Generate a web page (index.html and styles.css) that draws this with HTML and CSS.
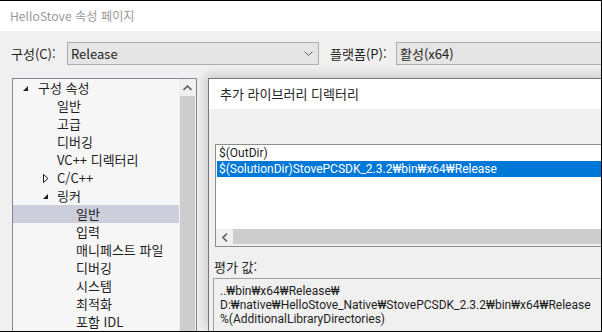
FILE: index.html
```html
<!DOCTYPE html>
<html lang="ko">
<head>
<meta charset="utf-8">
<link rel="stylesheet" href="styles.css">
</head>
<body>
<div class="win">
  <div class="titlebar">HelloStove 속성 페이지</div>
  <div class="body">
    <div class="cfg-row">
      <span class="lbl">구성(C):</span>
      <div class="combo cfg"><span>Release</span>
        <svg class="chev" width="9" height="5" viewBox="0 0 9 5"><path d="M0.5 0.5 L4.5 4.5 L8.5 0.5" fill="none" stroke="#606060" stroke-width="1"/></svg>
      </div>
      <span class="lbl plat-lbl">플랫폼(P):</span>
      <div class="combo plat"><span>활성(x64)</span></div>
    </div>
    <div class="main">
      <div class="tree">
        <div class="tree-list">
          <div class="row l0"><svg class="exp" width="6" height="6" viewBox="0 0 6 6"><polygon points="5,0 5,5 0,5" fill="#1e1e1e"/></svg>구성 속성</div>
          <div class="row l1">일반</div>
          <div class="row l1">고급</div>
          <div class="row l1">디버깅</div>
          <div class="row l1">VC++ 디렉터리</div>
          <div class="row l1"><svg class="col" width="6" height="9" viewBox="0 0 6 9"><polygon points="0.5,0.5 5,4.5 0.5,8.5" fill="none" stroke="#1e1e1e" stroke-width="1"/></svg>C/C++</div>
          <div class="row l1"><svg class="exp" width="6" height="6" viewBox="0 0 6 6"><polygon points="5,0 5,5 0,5" fill="#1e1e1e"/></svg>링커</div>
          <div class="row l2 sel">일반</div>
          <div class="row l2">입력</div>
          <div class="row l2">매니페스트 파일</div>
          <div class="row l2">디버깅</div>
          <div class="row l2">시스템</div>
          <div class="row l2">최적화</div>
          <div class="row l2">포함 IDL</div>
        </div>
        <div class="vscroll">
          <div class="sbtn"><svg width="9" height="6" viewBox="0 0 9 6"><path d="M0.5 5 L4.5 1 L8.5 5" fill="none" stroke="#606060" stroke-width="1.6"/></svg></div>
          <div class="vthumb"></div>
        </div>
      </div>
      <div class="panel">
        <div class="panel-head">추가 라이브러리 디렉터리</div>
        <div class="panel-body">
          <div class="listbox">
            <div class="items">
              <div class="item">$(OutDir)</div>
              <div class="item selitem">$(SolutionDir)StovePCSDK_2.3.2₩bin₩x64₩Release</div>
            </div>
            <div class="hscroll">
              <div class="sbtn h"><svg width="6" height="9" viewBox="0 0 6 9"><path d="M5 0.5 L1 4.5 L5 8.5" fill="none" stroke="#606060" stroke-width="1.6"/></svg></div>
              <div class="hthumb"></div>
            </div>
          </div>
          <div class="eval-label">평가 값:</div>
          <div class="evalbox">
            <div class="line">..₩bin₩x64₩Release₩</div>
            <div class="line">D:₩native₩HelloStove_Native₩StovePCSDK_2.3.2₩bin₩x64₩Release</div>
            <div class="line">%(AdditionalLibraryDirectories)</div>
          </div>
        </div>
      </div>
    </div>
  </div>
</div>
</body>
</html>
```

FILE: styles.css
```css
* { box-sizing: border-box; }
html, body { margin: 0; padding: 0; }
body {
  font-family: "Noto Sans CJK KR", sans-serif;
  font-size: 12px;
  color: #1e1e1e;
  background: #000;
}
.win {
  width: 602px;
  height: 332px;
  border-top: 1px solid #000;
  border-right: 1px solid #000;
  border-bottom: 1px solid #000;
  background: #f0f0f0;
  overflow: hidden;
  display: flex;
  flex-direction: column;
}
.titlebar {
  height: 30px;
  line-height: 30px;
  background: #fff;
  color: #9a9a9a;
  padding-left: 10px;
  font-size: 12.2px;
  flex: none;
}
.body {
  flex: 1;
  display: flex;
  flex-direction: column;
  padding-top: 11px;
  min-height: 0;
}
.cfg-row {
  display: flex;
  align-items: center;
  height: 23px;
  padding-left: 11px;
  flex: none;
  font-size: 13px;
}
.lbl { width: 56px; flex: none; }
.plat-lbl { margin-left: 11px; width: 66px; }
.combo {
  height: 23px;
  background: #e5e5e5;
  border: 1px solid #adadad;
  display: flex;
  align-items: center;
  padding-left: 3px;
  flex: none;
}
.combo.cfg { width: 252px; justify-content: space-between; padding-right: 5px; }
.combo.plat { width: 206px; }
.chev { display: block; }
.main {
  flex: 1;
  display: flex;
  margin-top: 13px;
  padding-left: 12px;
  min-height: 0;
}
.tree {
  width: 185px;
  flex: none;
  border: 1px solid #828790;
  border-bottom: none;
  background: #f6f6f6;
  display: flex;
  font-size: 13px;
}
.tree-list { flex: 1; }
.row {
  height: 18px;
  line-height: 18px;
  position: relative;
  white-space: nowrap;
}
.row.l0 { padding-left: 25px; }
.row.l1 { padding-left: 44px; }
.row.l2 { padding-left: 63px; }
.row.sel { background: #cccedb; }
.row .exp { position: absolute; left: 10px; top: 7px; }
.row.l1 .exp { left: 30px; }
.row .col { position: absolute; left: 30px; top: 5px; }
.vscroll {
  width: 17px;
  flex: none;
  background: #f0f0f0;
  display: flex;
  flex-direction: column;
}
.sbtn {
  width: 17px;
  height: 17px;
  flex: none;
  display: flex;
  align-items: center;
  justify-content: center;
}
.sbtn svg { display: block; }
.vthumb { flex: 1; background: #cdcdcd; margin: 0 1px; }
.panel {
  flex: none;
  width: 400px;
  border-left: 1px solid #767676;
  border-top: 1px solid #767676;
  background: #f0f0f0;
  box-shadow: -3px -3px 10px rgba(0,0,0,0.16);
  display: flex;
  flex-direction: column;
  margin-left: 11px;
}
.panel-head {
  height: 30px;
  line-height: 30px;
  background: #fff;
  padding-left: 11px;
  flex: none;
  font-size: 13px;
}
.panel-body {
  flex: 1;
  display: flex;
  flex-direction: column;
}
.listbox {
  margin-top: 35px;
  margin-left: 6px;
  height: 103px;
  border: 1px solid #8c8c8c;
  border-right: none;
  background: #fff;
  display: flex;
  flex-direction: column;
  flex: none;
}
.items { flex: 1; padding-left: 1px; font-family: Roboto, "Noto Sans CJK KR", sans-serif; font-size: 12px; }
.item {
  height: 16px;
  line-height: 16px;
  padding-left: 2px;
  white-space: nowrap;
}
.item.selitem { background: #0078d7; color: #fff; }
.hscroll {
  height: 17px;
  flex: none;
  display: flex;
  background: #f0f0f0;
}
.hthumb { flex: 1; background: #cdcdcd; margin: 0 0 2px 0; }
.eval-label {
  margin-top: 12px;
  margin-left: 5px;
  height: 16px;
  line-height: 16px;
  flex: none;
  font-size: 13px;
}
.evalbox {
  margin-top: 3px;
  margin-left: 4px;
  flex: 1;
  border: 1px solid #a0a0a0;
  border-right: none;
  border-bottom: none;
  padding-top: 5px;
  padding-left: 6px;
  background: #f0f0f0;
  font-family: Roboto, "Noto Sans CJK KR", sans-serif;
  font-size: 12px;
}
.line { height: 14px; line-height: 14px; white-space: nowrap; }
```
